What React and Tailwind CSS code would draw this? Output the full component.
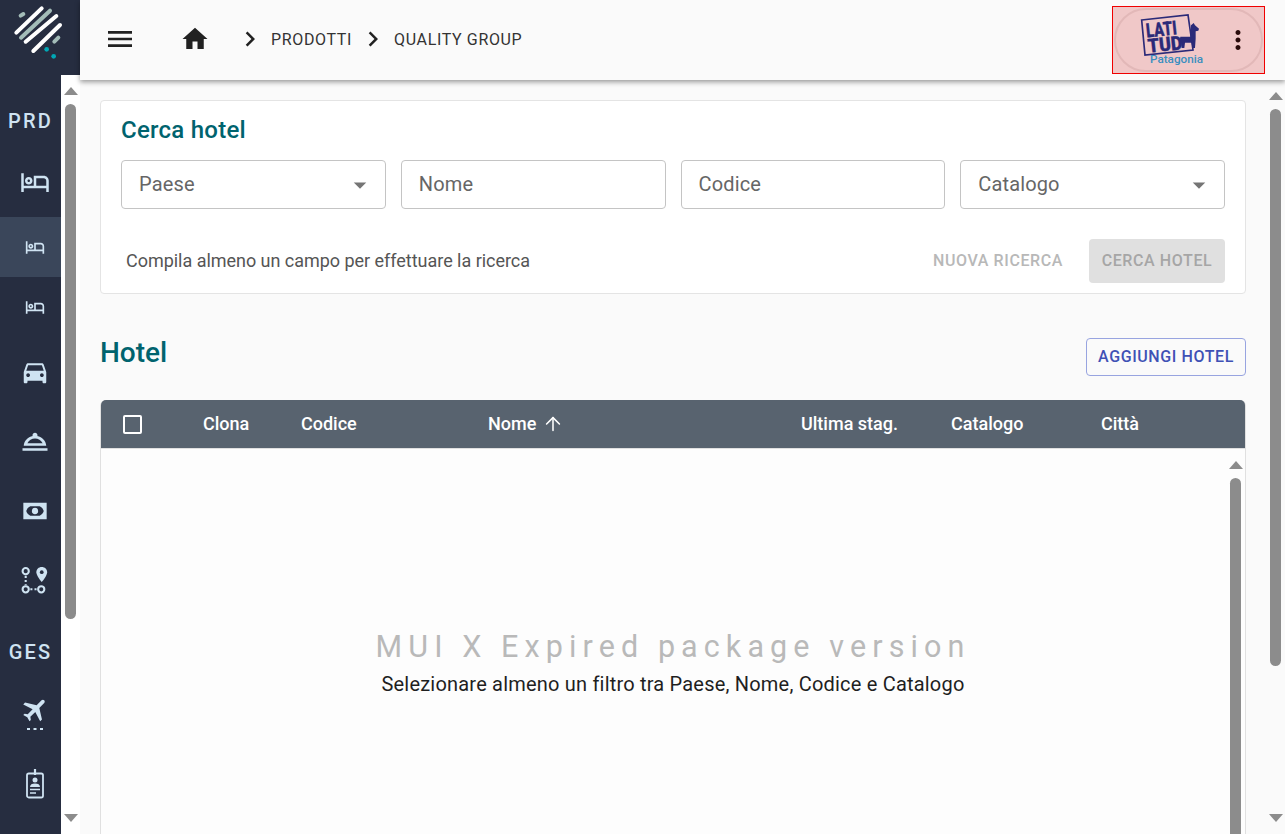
import { ArrowUp } from 'lucide-react';

const font = { fontFamily: 'Roboto, sans-serif' };

const PATHS = {
  bed: 'M7 14c1.66 0 3-1.34 3-3S8.66 8 7 8s-3 1.34-3 3 1.34 3 3 3zm0-4c.55 0 1 .45 1 1s-.45 1-1 1-1-.45-1-1 .45-1 1-1zm12-3h-8v8H3V5H1v15h2v-3h18v3h2v-9c0-2.21-1.79-4-4-4zm2 8h-8V9h6c1.1 0 2 .9 2 2v4z',
  car: 'M18.92 6.01C18.72 5.42 18.16 5 17.5 5h-11c-.66 0-1.21.42-1.42 1.01L3 12v8c0 .55.45 1 1 1h1c.55 0 1-.45 1-1v-1h12v1c0 .55.45 1 1 1h1c.55 0 1-.45 1-1v-8l-2.08-5.99zM6.5 16c-.83 0-1.5-.67-1.5-1.5S5.67 13 6.5 13s1.5.67 1.5 1.5S7.33 16 6.5 16zm11 0c-.83 0-1.5-.67-1.5-1.5s.67-1.5 1.5-1.5 1.5.67 1.5 1.5-.67 1.5-1.5 1.5zM5 11l1.5-4.5h11L19 11H5z',
  service: 'M2 17h20v2H2v-2zm11.84-9.74c.1-.24.16-.5.16-.76 0-1.1-.9-2-2-2s-2 .9-2 2c0 .26.06.52.16.76C6.25 8.13 3.24 11.17 3 15h18c-.24-3.83-3.25-6.87-7.16-7.74zM12 9.2c2.6 0 4.9 1.3 6.1 3.8H5.9c1.2-2.5 3.5-3.8 6.1-3.8z',
  money: 'M2 5h20v14H2V5zm6 3c-1.800.8-3 2.300-3.500 4 .5 1.700 1.700 3.200 3.500 4h8c1.800-.8 3-2.300 3.500-4-.5-1.700-1.700-3.200-3.500-4H8zm4 1.300a2.700 2.700 0 1 1 0 5.400 2.700 2.700 0 0 1 0-5.400z',
  plane: 'M21 16v-2l-8-5V3.5c0-.83-.67-1.5-1.5-1.5S10 2.67 10 3.5V9l-8 5v2l8-2.5V19l-2 1.5V22l3.5-1 3.5 1v-1.5L13 19v-5.5l8 2.5z',
  menu: 'M3 18h18v-2H3v2zm0-5h18v-2H3v2zm0-7v2h18V6H3z',
  home: 'M10 20v-6h4v6h5v-8h3L12 3 2 12h3v8z',
  chevron: 'M10 6 8.59 7.41 13.17 12l-4.58 4.59L10 18l6-6z',
  dots: 'M12 8c1.1 0 2-.9 2-2s-.9-2-2-2-2 .9-2 2 .9 2 2 2zm0 2c-1.1 0-2 .9-2 2s.9 2 2 2 2-.9 2-2-.9-2-2-2zm0 6c-1.1 0-2 .9-2 2s.9 2 2 2 2-.9 2-2-.9-2-2-2z',
  caret: 'M7 10l5 5 5-5z',
};

function Icon({ d, size = 24, className = '' }) {
  return (
    <svg width={size} height={size} viewBox="0 0 24 24" fill="currentColor" fillRule="evenodd" className={className}>
      <path d={d} />
    </svg>
  );
}

function RouteIcon() {
  return (
    <svg width="29" height="29" viewBox="0 0 28 28" fill="none" stroke="currentColor" strokeWidth="2">
      <circle cx="5.500" cy="5" r="3" />
      <circle cx="5.500" cy="22.500" r="3" />
      <circle cx="20.500" cy="22.500" r="3" />
      <path d="M5.500 9.500v9M10 22.500h6" strokeDasharray="2 2" />
      <path d="M21 1c-3 0-5.200 2.200-5.200 5 0 3.500 5.200 9.500 5.200 9.500s5.200-6 5.200-9.500c0-2.800-2.200-5-5.200-5z" fill="currentColor" stroke="none" />
      <circle cx="21" cy="6" r="1.800" fill="#262d40" stroke="none" />
    </svg>
  );
}

function PlaneIcon() {
  return (
    <svg width="28" height="34" viewBox="0 0 28 34" fill="currentColor">
      <g transform="translate(3 -0.500) rotate(45 12 12) scale(1.260) translate(-2.500 -2.200)">
        <path d={PATHS.plane} />
      </g>
      <rect x="6" y="30" width="3" height="2" />
      <rect x="12.500" y="30" width="3" height="2" />
      <rect x="19" y="30" width="3" height="2" />
    </svg>
  );
}

function BadgeIcon() {
  return (
    <svg width="20" height="30" viewBox="0 0 20 30" fill="none" stroke="currentColor" strokeWidth="1.800">
      <rect x="2" y="4.500" width="16" height="24" rx="1.800" />
      <path d="M10 0v6" strokeWidth="2.200" />
      <circle cx="10" cy="11" r="2.500" fill="currentColor" stroke="none" />
      <path d="M5 18c0-2.500 2-3.500 5-3.500s5 1 5 3.500z" fill="currentColor" stroke="none" />
      <path d="M5 20.500h10M5 24h6" strokeWidth="1.500" />
    </svg>
  );
}

function Logo() {
  return (
    <svg width="80" height="75" viewBox="0 0 240 225" fill="none" strokeLinecap="round" strokeWidth="12">
      <path d="M49 98 125 25" stroke="#fff" />
      <path d="M63 113 150 32" stroke="#a3bcb8" />
      <path d="M77 125 169 48" stroke="#fff" />
      <path d="M100 153 180 75" stroke="#fff" />
      <path d="M62 47 70 42" stroke="#a3bcb8" />
      <path d="M163 125 175 113" stroke="#a3bcb8" />
      <circle cx="140" cy="148" r="7" fill="#00a7b5" />
      <circle cx="161" cy="169" r="7" fill="#00a7b5" />
    </svg>
  );
}

function BrandLogo() {
  return (
    <svg width="72" height="56" viewBox="0 0 216 168" style={font}>
      <path d="M20 24 159 9 174 114 30 129z" fill="none" stroke="#2b2a78" strokeWidth="5" />
      <g transform="rotate(-6 20 24)" fill="#2b2a78" fontWeight="900" fontSize="58" stroke="#2b2a78" strokeWidth="1">
        <text x="30" y="78" textLength="92" lengthAdjust="spacingAndGlyphs">LATI</text>
        <text x="30" y="124" textLength="104" lengthAdjust="spacingAndGlyphs">TUD</text>
      </g>
      <path d="M176 33 180 40 192 50 190 56 182 58 182 80 180 108 172 108 170 92 150 92 148 108 140 108 138 90 134 84 136 74 166 74 168 40z" fill="#2b2a78" />
      <text x="45" y="153" fontSize="34" fontWeight="500" fill="#3a8fc0" textLength="159" lengthAdjust="spacingAndGlyphs">Patagonia</text>
    </svg>
  );
}

function Scrollbar({ thumb, className = '' }) {
  return (
    <div className={`flex flex-col items-center ${className}`}>
      <svg width="14" height="8" viewBox="0 0 14 8" className="shrink-0" fill="#8c8c8c"><path d="M7 0l7 8H0z" /></svg>
      <div className={`w-[11px] mt-[9px] rounded-[6px] bg-[#8c8c8c] shrink-0 ${thumb}`} />
      <div className="flex-1" />
      <svg width="14" height="8" viewBox="0 0 14 8" className="shrink-0" fill="#8c8c8c"><path d="M7 8l7-8H0z" /></svg>
    </div>
  );
}

function NavRow({ height, active, children }) {
  return (
    <div className={`flex items-center justify-center shrink-0 pl-[8px] text-[#cfe3f2] ${height} ${active ? 'bg-[#3a465a]' : ''}`}>
      {children}
    </div>
  );
}

function NavLabel({ height, children }) {
  return (
    <div className={`flex items-center justify-center shrink-0 text-[#cfe3f2] text-[20px] font-medium tracking-[2.200px] ${height}`}>
      {children}
    </div>
  );
}

function Sidebar() {
  return (
    <aside className="w-[80px] shrink-0 flex flex-col bg-[#262d40] h-full">
      <div className="h-[75px] shrink-0"><Logo /></div>
      <div className="flex flex-1 min-h-0">
        <nav className="w-[61px] shrink-0 flex flex-col pt-[20px] overflow-hidden">
          <NavLabel height="h-[52px]">PRD</NavLabel>
          <NavRow height="h-[70px]"><Icon d={PATHS.bed} size={30} /></NavRow>
          <NavRow height="h-[60px]" active><Icon d={PATHS.bed} size={20} /></NavRow>
          <NavRow height="h-[60px]"><Icon d={PATHS.bed} size={20} /></NavRow>
          <NavRow height="h-[70px]"><Icon d={PATHS.car} size={30} /></NavRow>
          <NavRow height="h-[69px]"><Icon d={PATHS.service} size={30} /></NavRow>
          <NavRow height="h-[69px]"><Icon d={PATHS.money} size={28} /></NavRow>
          <NavRow height="h-[70px]"><RouteIcon /></NavRow>
          <NavLabel height="h-[74px]">GES</NavLabel>
          <NavRow height="h-[52px]"><PlaneIcon /></NavRow>
          <NavRow height="h-[86px]"><BadgeIcon /></NavRow>
        </nav>
        <Scrollbar thumb="h-[515px]" className="w-[19px] bg-white pt-[12px] pb-[12px]" />
      </div>
    </aside>
  );
}

function TopBar() {
  return (
    <header className="h-[80px] shrink-0 bg-[#fafafa] shadow-[0_2px_5px_rgba(0,0,0,0.4)] relative z-10 flex items-center text-[#212121]">
      <Icon d={PATHS.menu} size={32} className="ml-[24px] -mt-[2px]" />
      <Icon d={PATHS.home} size={30} className="ml-[44px] -mt-[2px]" />
      <Icon d={PATHS.chevron} size={30} className="ml-[25px] -mt-[2px]" />
      <span className="ml-[6px] text-[16px] tracking-[0.650px] text-[#333]">PRODOTTI</span>
      <Icon d={PATHS.chevron} size={30} className="ml-[6px] -mt-[2px]" />
      <span className="ml-[6px] text-[16px] tracking-[0.650px] text-[#333]">QUALITY GROUP</span>
      <div className="ml-auto mr-[20px] w-[153px] h-[68px] border border-[#f00000] bg-[#f0c8c8] flex items-center p-[1px]">
        <div className="w-full h-full rounded-full border-2 border-[#e2b8b8] flex items-center pl-[19px] pr-[8px] justify-between">
          <BrandLogo />
          <Icon d={PATHS.dots} size={30} className="text-[#2a0a0a]" />
        </div>
      </div>
    </header>
  );
}

function Field({ label, select }) {
  return (
    <div className="flex-1 h-[49px] rounded-[4px] border border-[#c4c4c4] bg-white flex items-center pl-[17px] pr-[12px] text-[20px] text-[#666] tracking-[0.150px]">
      <span className="flex-1 -mt-[2px]">{label}</span>
      {select && <Icon d={PATHS.caret} size={30} className="text-[#757575] -mr-[2px]" />}
    </div>
  );
}

function SearchCard() {
  return (
    <section className="h-[194px] shrink-0 rounded-[4px] border border-[#e4e4e4] bg-white px-[20px] pt-[14px]">
      <h2 className="text-[24px] tracking-[0.250px] font-medium leading-[30px] text-[#00636e]">Cerca hotel</h2>
      <div className="flex gap-[15px] mt-[15px]">
        <Field label="Paese" select />
        <Field label="Nome" />
        <Field label="Codice" />
        <Field label="Catalogo" select />
      </div>
      <div className="flex items-center mt-[30px]">
        <span className="ml-[5px] text-[18px] tracking-[-0.030px] text-[#555] -mt-[2px]">Compila almeno un campo per effettuare la ricerca</span>
        <span className="ml-auto text-[16px] font-medium tracking-[0.600px] text-[#b8b8b8]">NUOVA RICERCA</span>
        <span className="ml-[26px] w-[136px] h-[44px] rounded-[4px] bg-[#e0e0e0] flex items-center justify-center text-[16px] font-medium tracking-[0.600px] text-[#a6a6a6]">CERCA HOTEL</span>
      </div>
    </section>
  );
}

function HotelTable() {
  const columns = [
    ['Clona', 'w-[98px]'],
    ['Codice', 'w-[187px]'],
    ['Nome', 'w-[313px]'],
    ['Ultima stag.', 'w-[150px]'],
    ['Catalogo', 'w-[150px]'],
    ['Città', 'w-[100px]'],
  ];
  return (
    <section className="mt-[24px] flex-1 rounded-t-[6px] border border-[#e0e0e0] border-b-0 bg-[#fdfdfd] flex flex-col min-h-[440px]">
      <div className="h-[49px] shrink-0 rounded-t-[5px] bg-[#58636f] border-b border-[#e0e0e0] flex items-center text-white text-[18px] font-medium -mt-[1px] pb-[1px]">
        <div className="w-[102px] pl-[22px] shrink-0">
          <div className="w-[19px] h-[19px] rounded-[2px] border-2 border-white mt-[2px]" />
        </div>
        {columns.map(([name, width]) => (
          <div key={name} className={`${width} shrink-0 flex items-center gap-[6px]`}>
            {name}
            {name === 'Nome' && <ArrowUp size={22} strokeWidth={1.700} />}
          </div>
        ))}
      </div>
      <div className="relative flex-1 flex flex-col items-center pt-[180px]">
        <div className="text-[30.500px] font-normal leading-[36px] tracking-[6.100px] text-[#b9b9b9]">MUI X Expired package version</div>
        <div className="text-[20px] tracking-[0.200px] leading-[26px] mt-[6px] text-[#1f1f1f]">Selezionare almeno un filtro tra Paese, Nome, Codice e Catalogo</div>
        <Scrollbar thumb="h-[500px]" className="absolute right-[1px] top-[12px] w-[17px] h-[600px]" />
      </div>
    </section>
  );
}

export default function App() {
  return (
    <div style={font} className="w-[1285px] h-[834px] flex overflow-hidden bg-[#fafafa]">
      <Sidebar />
      <div className="flex-1 min-w-0 flex flex-col">
        <TopBar />
        <div className="flex-1 min-h-0 flex">
          <main className="flex-1 min-w-0 pl-[20px] pr-[22px] pt-[20px] flex flex-col overflow-hidden">
            <SearchCard />
            <div className="flex items-center justify-between mt-[44px] shrink-0">
              <h2 className="text-[28px] font-medium text-[#00636e] leading-[32px] -mt-[8px]">Hotel</h2>
              <div className="w-[160px] h-[38px] rounded-[4px] border border-[#98a4e0] flex items-center justify-center text-[16px] font-medium tracking-[0.600px] text-[#3f51b5]">AGGIUNGI HOTEL</div>
            </div>
            <HotelTable />
          </main>
          <Scrollbar thumb="h-[557px]" className="w-[17px] shrink-0 pt-[12px] pb-[12px] pr-[2px] bg-[#fafafa]" />
        </div>
      </div>
    </div>
  );
}
